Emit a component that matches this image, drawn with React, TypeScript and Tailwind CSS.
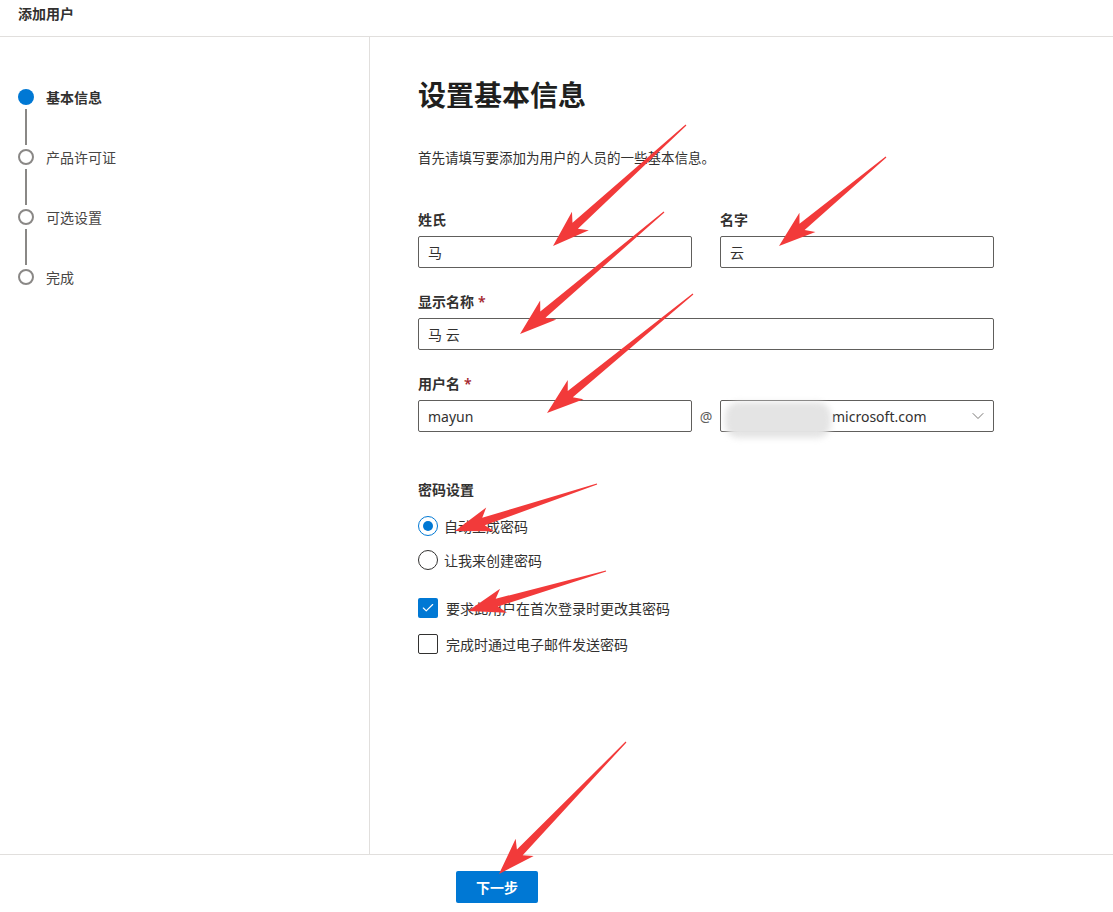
import { ChevronDown, Check } from 'lucide-react';

type Pt = [number, number];

// annotation arrows: [tail, tip]
const arrows: [Pt, Pt][] = [
    [[686, 125], [553, 246]],
    [[886, 157], [779, 246]],
    [[664, 212], [520, 334]],
    [[693, 294], [547, 413]],
    [[597, 484], [455, 531]],
    [[606, 571], [468, 611]],
    [[626, 742], [499, 874]],
];

function arrowPoints(tail: Pt, tip: Pt) {
    const dx = tip[0] - tail[0];
    const dy = tip[1] - tail[1];
    const len = Math.hypot(dx, dy);
    const ux = dx / len;
    const uy = dy / len;
    const nx = -uy;
    const ny = ux;
    const head = 30;
    const base: Pt = [tip[0] - ux * head, tip[1] - uy * head];
    const back: Pt = [tip[0] - ux * (head + 7), tip[1] - uy * (head + 7)];
    const p = (b: Pt, w: number): string => `${b[0] + nx * w},${b[1] + ny * w}`;
    return [
        p(tail, 0.6),
        p(base, 4),
        p(back, 12.5),
        `${tip[0]},${tip[1]}`,
        p(back, -12.5),
        p(base, -4),
        p(tail, -0.6),
    ].join(' ');
}

const steps = [
    { label: '基本信息', active: true },
    { label: '产品许可证', active: false },
    { label: '可选设置', active: false },
    { label: '完成', active: false },
];

function Field({ label, required, value }: { label: string; required?: boolean; value: string }) {
    return (
        <div className="flex flex-col">
            <label className="text-[14px] leading-5 font-semibold text-[#323130]">
                {label}
                {required && <span className="text-[#a4262c] ml-1">*</span>}
            </label>
            <div className="mt-[6px] h-[32px] border border-[#605e5c] rounded-[2px] flex items-center px-[9px] text-[14px] text-[#323130]">
                {value}
            </div>
        </div>
    );
}

export default function App() {
    return (
        <div className="relative w-[1113px] h-[912px] bg-white flex flex-col font-['Noto_Sans','Noto_Sans_CJK_SC',sans-serif] text-[#323130] overflow-hidden">
            {/* Header */}
            <div className="h-[37px] border-b border-[#e1dfdd] pl-[18px] pt-[3px] text-[14px] font-semibold">
                添加用户
            </div>

            <div className="flex h-[817px]">
                {/* Left: stepper */}
                <div className="w-[370px] border-r border-[#e1dfdd] pl-[18px] pt-[52px]">
                    {steps.map((s, i) => (
                        <div key={s.label} className="flex flex-col">
                            <div className="flex items-center h-[16px]">
                                {s.active ? (
                                    <div className="w-[16px] h-[16px] rounded-full bg-[#0078d4]" />
                                ) : (
                                    <div className="w-[16px] h-[16px] rounded-full border-2 border-[#8a8886] bg-white" />
                                )}
                                <span className={`ml-[12px] text-[14px] ${s.active ? 'font-semibold text-[#323130]' : 'text-[#484644]'}`}>
                                    {s.label}
                                </span>
                            </div>
                            {i < steps.length - 1 && (
                                <div className="w-[2px] h-[36px] my-[4px] ml-[7px] bg-[#8a8886]" />
                            )}
                        </div>
                    ))}
                </div>

                {/* Right: form */}
                <div className="flex-1 pl-[48px] pt-[40px]">
                    <h1 className="text-[28px] leading-[36px] font-bold text-[#201f1e]">设置基本信息</h1>
                    <p className="mt-[35px] text-[13.5px] leading-5 text-[#323130]">首先请填写要添加为用户的人员的一些基本信息。</p>

                    <div className="w-[576px] mt-[42px] flex flex-col gap-[24px]">
                        <div className="grid grid-cols-2 gap-[28px]">
                            <Field label="姓氏" value="马" />
                            <Field label="名字" value="云" />
                        </div>
                        <Field label="显示名称" required value="马 云" />

                        <div className="flex flex-col">
                            <label className="text-[14px] leading-5 font-semibold">
                                用户名<span className="text-[#a4262c] ml-1">*</span>
                            </label>
                            <div className="mt-[6px] flex items-center">
                                <div className="w-[274px] h-[32px] border border-[#605e5c] rounded-[2px] flex items-center px-[9px] text-[14px]">
                                    mayun
                                </div>
                                <span className="w-[28px] text-center text-[14px] text-[#605e5c]">@</span>
                                <div className="relative w-[274px] h-[32px] border border-[#605e5c] rounded-[2px] flex items-center text-[14px]">
                                    <div className="absolute left-[4px] top-[1px] w-[106px] h-[36px] rounded-[14px] bg-[#e4e4e4] blur-[3px]" />
                                    <span className="ml-[111px]">microsoft.com</span>
                                    <ChevronDown className="ml-auto mr-[5px] w-[20px] h-[20px] text-[#605e5c]" strokeWidth={1} />
                                </div>
                            </div>
                        </div>
                    </div>

                    <div className="mt-[48px] text-[14px] leading-5 font-semibold">密码设置</div>

                    <div className="mt-[16px] flex items-center h-[20px]">
                        <div className="w-[20px] h-[20px] rounded-full border border-[#0078d4] flex items-center justify-center">
                            <div className="w-[10px] h-[10px] rounded-full bg-[#0078d4]" />
                        </div>
                        <span className="ml-[6px] text-[14px]">自动生成密码</span>
                    </div>
                    <div className="mt-[14px] flex items-center h-[20px]">
                        <div className="w-[20px] h-[20px] rounded-full border border-[#323130]" />
                        <span className="ml-[6px] text-[14px]">让我来创建密码</span>
                    </div>

                    <div className="mt-[28px] flex items-center h-[20px]">
                        <div className="w-[20px] h-[20px] rounded-[2px] bg-[#0078d4] flex items-center justify-center">
                            <Check className="w-[14px] h-[14px] text-white" strokeWidth={2} />
                        </div>
                        <span className="ml-[8px] text-[14px]">要求此用户在首次登录时更改其密码</span>
                    </div>
                    <div className="mt-[16px] flex items-center h-[20px]">
                        <div className="w-[20px] h-[20px] rounded-[2px] border border-[#323130]" />
                        <span className="ml-[8px] text-[14px]">完成时通过电子邮件发送密码</span>
                    </div>
                </div>
            </div>

            {/* Footer */}
            <div className="flex-1 border-t border-[#e1dfdd] pl-[456px] pt-[16px]">
                <button className="w-[82px] h-[32px] bg-[#0078d4] rounded-[2px] text-white text-[14px] font-semibold">
                    下一步
                </button>
            </div>

            {/* red annotation arrows */}
            <svg className="absolute inset-0 pointer-events-none" width="1113" height="912">
                {arrows.map(([a, b], i) => (
                    <polygon key={i} points={arrowPoints(a, b)} fill="#f23a3a" />
                ))}
            </svg>
        </div>
    );
}
